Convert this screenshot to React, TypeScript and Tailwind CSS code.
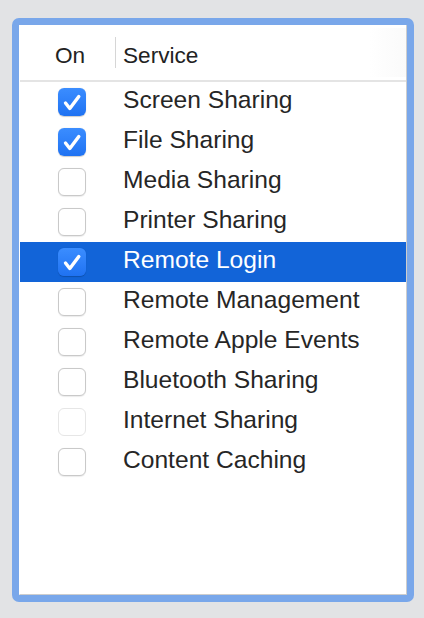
import React from 'react';

type Service = { name: string; on: boolean; selected?: boolean; dim?: boolean };

const services: Service[] = [
  { name: 'Screen Sharing', on: true },
  { name: 'File Sharing', on: true },
  { name: 'Media Sharing', on: false },
  { name: 'Printer Sharing', on: false },
  { name: 'Remote Login', on: true, selected: true },
  { name: 'Remote Management', on: false },
  { name: 'Remote Apple Events', on: false },
  { name: 'Bluetooth Sharing', on: false },
  { name: 'Internet Sharing', on: false, dim: true },
  { name: 'Content Caching', on: false },
];

function Checkbox({ checked, dim }: { checked: boolean; dim?: boolean }) {
  if (checked) {
    return (
      <div className="w-[28px] h-[28px] rounded-[6px] bg-gradient-to-b from-[#3b8dff] to-[#1f72f2] flex items-center justify-center shadow-[0_0.5px_1px_rgba(0,0,0,0.2)]">
        <svg width="28" height="28" viewBox="0 0 28 28" fill="none">
          <path d="M7.5 15 L11.8 20.5 L20.8 8.5" stroke="white" strokeWidth="3.4" strokeLinecap="round" strokeLinejoin="round" />
        </svg>
      </div>
    );
  }
  return (
    <div
      className={`w-[28px] h-[28px] rounded-[6px] bg-white border ${dim ? 'border-[#e6e6e6]' : 'border-[#c9c9c9] shadow-[0_0.5px_1px_rgba(0,0,0,0.08)]'}`}
    />
  );
}

export default function App() {
  return (
    <div className="w-[424px] h-[618px] bg-[#e2e3e5] pt-[18px] pl-[12px]" style={{ fontFamily: '"Liberation Sans", Arial, sans-serif' }}>
      <div className="w-[402px] h-[584px] rounded-[7px] bg-[#79a7ea] p-[7px]">
        <div className="w-full h-full bg-white border-l border-l-white border-r border-r-[#cdcdcd] border-b border-b-[#cdcdcd] flex flex-col">
          {/* Header */}
          <div className="h-[55px] flex items-center text-[22.6px] text-[#222222] pt-[6px]">
            <div className="w-[95px] pl-[35px]">On</div>
            <div className="w-px h-[31px] bg-[#d6d6d6] -mt-[6px]" />
            <div className="pl-[7px] flex-1">Service</div>
            <div className="w-[36px] h-full -mt-[6px] bg-gradient-to-r from-white to-[#fafafa]" />
          </div>
          <div className="h-[2px] bg-[#e4e4e4]" />

          {/* Rows */}
          <div className="flex flex-col">
            {services.map((s) => (
              <div
                key={s.name}
                className={`h-[40px] flex items-center ${s.selected ? 'bg-[#1264d8] text-white' : 'text-[#262626]'}`}
              >
                <div className="w-[103px] pl-[38px] flex items-center">
                  <Checkbox checked={s.on} dim={s.dim} />
                </div>
                <span className="text-[24.6px] pb-[3px]">{s.name}</span>
              </div>
            ))}
          </div>
        </div>
      </div>
    </div>
  );
}
